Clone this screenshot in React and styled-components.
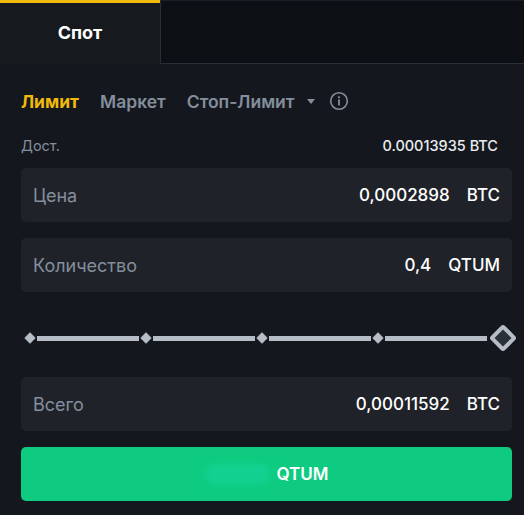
import React from "react";
import styled, { createGlobalStyle } from "styled-components";

const GlobalStyle = createGlobalStyle`
  html, body {
    margin: 0;
    padding: 0;
    background: #14181e;
  }
  body {
    font-family: Inter, "Noto Sans", sans-serif;
    color: #eaecef;
  }
`;

const Page = styled.div`
  width: 524px;
  height: 515px;
  overflow: hidden;
  background: #14181e;
`;

const Tabs = styled.div`
  display: flex;
  height: 64px;
`;

const Tab = styled.div`
  width: 160px;
  display: flex;
  align-items: center;
  justify-content: center;
  box-sizing: border-box;
  border-top: 3px solid #f0b90b;
  background: #161a1f;
  font-size: 18px;
  font-weight: 700;
  color: #ffffff;
  padding-bottom: 2px;
`;

const TabRest = styled.div`
  flex: 1;
  background: #0c0f13;
  border-left: 1px solid #2a2f36;
  border-bottom: 1px solid #2a2f36;
  border-top: 1px solid #1c2026;
`;

const Body = styled.div`
  padding: 0 12px 0 21px;
`;

const OrderTypes = styled.div`
  display: flex;
  align-items: center;
  height: 30px;
  margin-top: 22px;
  gap: 21px;
`;

const OrderType = styled.span`
  font-size: 17.5px;
  font-weight: ${(p) => (p.active ? 700 : 600)};
  color: ${(p) => (p.active ? "#f0b90b" : "#848e9c")};
  display: flex;
  align-items: center;
`;

const Caret = styled.span`
  margin-left: 13px;
  width: 0;
  height: 0;
  border-left: 4px solid transparent;
  border-right: 4px solid transparent;
  border-top: 5px solid #848e9c;
`;

const InfoIcon = styled.svg`
  margin-left: -7px;
  display: block;
`;

const AvailRow = styled.div`
  display: flex;
  justify-content: space-between;
  align-items: center;
  margin-top: 19px;
  padding-right: 14px;
  height: 20px;
  font-size: 14.5px;
`;

const AvailLabel = styled.span`
  color: #848e9c;
`;

const AvailValue = styled.span`
  color: #eaecef;
  font-weight: 500;
`;

const Field = styled.div`
  display: flex;
  align-items: center;
  height: 54px;
  margin-top: ${(p) => p.top}px;
  padding: 0 12px;
  border-radius: 5px;
  background: #1f2329;
  font-size: 18px;
`;

const FieldLabel = styled.span`
  color: #848e9c;
  flex: 1;
`;

const FieldValue = styled.span`
  color: #ffffff;
  font-weight: 500;
  font-size: 17px;
`;

const FieldUnit = styled.span`
  color: #ffffff;
  font-weight: 500;
  font-size: 17px;
  margin-left: 17px;
`;

const Slider = styled.div`
  display: flex;
  align-items: center;
  height: 22px;
  margin: 35px -5px 0 5px;
`;

const Track = styled.div`
  flex: 1;
  height: 5px;
  background: #b7bdc6;
  margin: 0 3px;
`;

const Dot = styled.div`
  width: 8px;
  height: 8px;
  background: #b7bdc6;
  transform: rotate(45deg);
  flex: none;
`;

const Handle = styled.div`
  width: 12px;
  height: 12px;
  margin: 0 4px 0 3px;
  border: 4px solid #b7bdc6;
  border-radius: 3px;
  background: #2b3139;
  transform: rotate(45deg);
  flex: none;
`;

const BuyButton = styled.div`
  height: 54px;
  margin-top: 16px;
  border-radius: 5px;
  background: #0ecb81;
  display: flex;
  align-items: center;
  justify-content: center;
  font-size: 17px;
  font-weight: 600;
  color: #ffffff;
`;

const Smudge = styled.span`
  width: 64px;
  height: 20px;
  margin-right: 6px;
  margin-left: 2px;
  border-radius: 8px;
  background: #13d191;
  filter: blur(3px);
`;

const ticks = [0, 1, 2, 3];

export default function App() {
  return (
    <Page>
      <GlobalStyle />
      <Tabs>
        <Tab>Спот</Tab>
        <TabRest />
      </Tabs>
      <Body>
        <OrderTypes>
          <OrderType active>Лимит</OrderType>
          <OrderType>Маркет</OrderType>
          <OrderType>
            Стоп-Лимит
            <Caret />
          </OrderType>
          <InfoIcon width="20" height="20" viewBox="0 0 20 20">
            <circle cx="10" cy="10" r="8.3" fill="none" stroke="#848e9c" strokeWidth="1.6" />
            <rect x="9.1" y="8.4" width="1.8" height="6" fill="#848e9c" />
            <rect x="9.1" y="5.3" width="1.8" height="1.9" fill="#848e9c" />
          </InfoIcon>
        </OrderTypes>
        <AvailRow>
          <AvailLabel>Дост.</AvailLabel>
          <AvailValue>0.00013935 BTC</AvailValue>
        </AvailRow>
        <Field top={13}>
          <FieldLabel>Цена</FieldLabel>
          <FieldValue>0,0002898</FieldValue>
          <FieldUnit>BTC</FieldUnit>
        </Field>
        <Field top={16}>
          <FieldLabel>Количество</FieldLabel>
          <FieldValue>0,4</FieldValue>
          <FieldUnit>QTUM</FieldUnit>
        </Field>
        <Slider>
          {ticks.map((i) => (
            <React.Fragment key={i}>
              <Dot />
              <Track />
            </React.Fragment>
          ))}
          <Handle />
        </Slider>
        <Field top={28}>
          <FieldLabel>Всего</FieldLabel>
          <FieldValue>0,00011592</FieldValue>
          <FieldUnit>BTC</FieldUnit>
        </Field>
        <BuyButton>
          <Smudge />
          QTUM
        </BuyButton>
      </Body>
    </Page>
  );
}
